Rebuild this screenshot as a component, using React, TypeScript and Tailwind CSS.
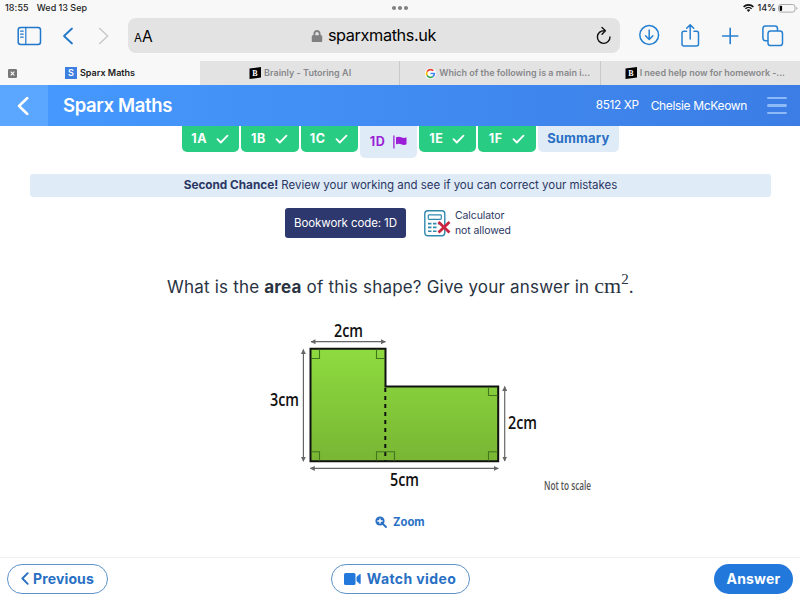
import { ReactNode } from 'react';
import { FaLock } from 'react-icons/fa';

interface BrowserTabProps {
  icon: ReactNode;
  title: string;
  titleClass: string;
}

const tasks = ['1A', '1B', '1C', '1D', '1E', '1F'];

function BrainlyIcon() {
  return (
    <svg width="12" height="12" viewBox="0 0 12 12" className="shrink-0">
      <path d="M.5 1.5 12 0v10.5L.5 12z" fill="#000" />
      <text x="3.2" y="9" fontSize="8" fontWeight="900" fill="#fff" fontFamily="Liberation Serif, serif">B</text>
    </svg>
  );
}

function GoogleIcon() {
  return (
    <svg width="11" height="11" viewBox="-2 -2 52 52" className="shrink-0">
      <circle cx="24" cy="24" r="26" fill="#fff" />
      <g fill="none" strokeWidth="8">
        <path d="M37 11A18.5 18.5 0 0 0 8 15" stroke="#ea4335" />
        <path d="M8 15a18.5 18.5 0 0 0 0 18" stroke="#fbbc05" />
        <path d="M8 33a18.5 18.5 0 0 0 27 6" stroke="#34a853" />
        <path d="M35 39q7-6 7-15H24" stroke="#4285f4" />
      </g>
    </svg>
  );
}

function StatusBar() {
  return (
    <div className="grid h-[18px] grid-cols-3 items-start px-[5px] pt-[2px] text-[9px] leading-[12px] font-medium text-[#222]">
      <div className="flex gap-[8px]">
        <span className="tracking-[0.1px]">18:55</span>
        <span>Wed 13 Sep</span>
      </div>
      <div className="flex h-[12px] items-center justify-center gap-[2px]">
        <i className="size-[4px] rounded-full bg-[#808080]" />
        <i className="size-[4px] rounded-full bg-[#808080]" />
        <i className="size-[4px] rounded-full bg-[#808080]" />
      </div>
      <div className="-mr-[3px] flex items-center justify-end gap-[3px]">
        <svg width="11" height="8" viewBox="0 0 11 8" fill="none" stroke="#111" strokeWidth="1.6">
          <path d="M.6 2.9a7 7 0 0 1 9.8 0M2.4 4.8a4.4 4.4 0 0 1 6.2 0" />
          <path d="M5.5 8 3.8 6.1a2.4 2.4 0 0 1 3.4 0z" fill="#111" stroke="none" />
        </svg>
        <span>14%</span>
        <svg width="20" height="9" viewBox="0 0 20 9" className="-ml-[1px]">
          <rect x=".5" y=".5" width="16.5" height="7.6" rx="2.3" fill="none" stroke="#aaa" />
          <rect x="1.7" y="1.7" width="2.4" height="5.2" rx=".8" fill="#000" />
          <path d="M18.3 2.8v3q1.2-.5 1.2-1.5t-1.2-1.5" fill="#aaa" />
        </svg>
      </div>
    </div>
  );
}

function Toolbar() {
  return (
    <div className="flex h-[35px] items-center">
      <svg width="120" height="35" viewBox="0 0 120 35" fill="none" stroke="#2077ca" strokeWidth="1.5" strokeLinecap="round" strokeLinejoin="round">
        <rect x="18.2" y="9.4" width="22.3" height="17" rx="2.5" />
        <path d="M25.8 9.4v17M20.6 13.2h2.6M20.6 16.2h2.6M20.6 19.2h2.6" strokeWidth="1.2" />
        <path d="m72 10.5-8 7.5 8 7.5" strokeWidth="1.8" />
        <path d="m99.7 10.5 8 7.5-8 7.5" stroke="#c9c9c9" />
      </svg>
      <div className="ml-[8px] flex h-[35px] w-[492px] items-center rounded-[8px] bg-[#e3e3e4] pr-[8px] pl-[6px]">
        <span className="w-[60px] pt-[2px] text-[15.5px] leading-none text-black">
          <span className="text-[11.5px]">A</span>A
        </span>
        <div className="flex flex-1 items-center justify-center gap-[5px] pl-[1px]">
          <FaLock size={12} className="text-[#808083]" />
          <span className="text-[16.3px] tracking-[-0.4px] text-black">sparxmaths.uk</span>
        </div>
        <svg width="17" height="20" viewBox="0 0 17 20" fill="none" stroke="#111" strokeWidth="1.4" strokeLinecap="round" strokeLinejoin="round" className="ml-[43px]">
          <path d="M9.5 4.8A6.3 6.3 0 1 0 15 11M7 1.6l3.4 3.2L7 8.3" />
        </svg>
      </div>
      <svg width="180" height="35" viewBox="0 0 180 35" fill="none" stroke="#2680d2" strokeWidth="1.5" strokeLinecap="round" strokeLinejoin="round">
        <circle cx="29.2" cy="17" r="9.4" />
        <path d="M29.2 12v9.3M25.5 17.8l3.7 3.7 3.7-3.7" />
        <path d="M66.5 13.2H64q-2 0-2 2V26q0 2 2 2h12.5q2 0 2-2V15.2q0-2-2-2H74M70.2 21V7M66.7 10.3l3.5-3.4 3.5 3.4" />
        <path d="M110.2 10.4v15.2M102.6 18h15.2" strokeWidth="1.6" />
        <rect x="148" y="13" width="14.5" height="14.5" rx="2.6" />
        <path d="M147.5 22.7h-2q-2.6 0-2.6-2.6v-9.4q0-2.6 2.6-2.6h9.4q2.6 0 2.6 2.6v1.8" />
      </svg>
    </div>
  );
}

function BrowserTab({ icon, title, titleClass }: BrowserTabProps) {
  return (
    <div className="flex h-[24px] flex-1 items-center gap-[3px] border-l border-[#c9c9c9] bg-[#e3e3e4] first:border-l-0">
      {icon}
      <span className={titleClass}>{title}</span>
    </div>
  );
}

function BrowserTabs() {
  return (
    <div className="mt-[8px] flex h-[24px] text-[9px] font-semibold whitespace-nowrap text-[#88888a]">
      <div className="flex w-[200px] items-center pl-[8px] text-[#1c1c1c]">
        <svg width="9" height="9" viewBox="0 0 9 9">
          <rect width="9" height="9" rx="1.3" fill="#777" />
          <path d="m2.7 2.7 3.6 3.6m0-3.6L2.7 6.3" stroke="#fff" strokeWidth="1.1" />
        </svg>
        <span className="ml-[48px] flex size-[12px] items-center justify-center bg-[#3e80df] text-[9px] text-white">S</span>
        <span className="ml-[3px]">Sparx Maths</span>
      </div>
      <div className="flex w-[600px]">
        <BrowserTab icon={<span className="ml-[49px]"><BrainlyIcon /></span>} title="Brainly - Tutoring AI" titleClass="tracking-[0.02px]" />
        <BrowserTab icon={<span className="ml-[25px]"><GoogleIcon /></span>} title="Which of the following is a main i..." titleClass="tracking-[-0.01px]" />
        <BrowserTab icon={<span className="ml-[24px]"><BrainlyIcon /></span>} title="I need help now for homework -..." titleClass="tracking-[-0.03px]" />
      </div>
    </div>
  );
}

function Header() {
  return (
    <header className="flex h-[41px] items-center bg-linear-to-r from-[#469aff] to-[#3b7de5] text-white">
      <div className="flex h-full w-[48px] items-center bg-[#5ba6ff] pl-[17px]">
        <svg width="12" height="20" viewBox="0 0 12 20" fill="none" stroke="#fff" strokeWidth="2.5" strokeLinecap="round" strokeLinejoin="round">
          <path d="M10.3 2 2 10l8.3 8" />
        </svg>
      </div>
      <h1 className="ml-[15px] text-[18.5px] font-semibold tracking-[-0.35px]">Sparx Maths</h1>
      <span className="ml-auto text-[11.8px] tracking-[-0.35px]">8512 XP</span>
      <span className="ml-[12px] text-[12px] tracking-[-0.35px]">Chelsie McKeown</span>
      <div className="mr-[13px] ml-[20px] flex w-[20px] flex-col gap-[5px]">
        <i className="h-[2.5px] rounded-full bg-[#8db9f7]" />
        <i className="h-[2.5px] rounded-full bg-[#8db9f7]" />
        <i className="h-[2.5px] rounded-full bg-[#8db9f7]" />
      </div>
    </header>
  );
}

function CheckIcon() {
  return (
    <svg width="13" height="10" viewBox="0 0 12 10" fill="none" stroke="#fff" strokeWidth="1.8" strokeLinecap="round" strokeLinejoin="round">
      <path d="m1 5.2 3.3 3.3L11 1.7" />
    </svg>
  );
}

function TaskTabs() {
  return (
    <nav className="flex h-[32px] items-start gap-[2px] pl-[182px] text-[12.5px] font-bold">
      {tasks.map((task) =>
        task === '1D' ? (
          <div key={task} className="flex h-[32px] w-[57.3px] items-center justify-center gap-[8px] rounded-b-[5px] bg-[#dfebf7] text-[#9a1fd6]">
            <span className="tracking-[0.6px]">{task}</span>
            <svg width="14" height="14" viewBox="0 0 14 14">
              <path d="M.9.5v13" stroke="#9a1fd6" strokeWidth="1.3" />
              <path d="M3 2.3q2.700-1.300 5.300 0t5.200 0v7q-2.600 1.300-5.200 0T3 9.300z" fill="#9a1fd6" />
            </svg>
          </div>
        ) : (
          <div key={task} className="flex h-[26px] w-[57.3px] items-center justify-center gap-[9px] rounded-b-[5px] bg-[#29cc83] pr-px text-white">
            <span className="tracking-[0.6px]">{task}</span>
            <CheckIcon />
          </div>
        )
      )}
      <div className="flex h-[26px] w-[81px] items-center justify-center rounded-b-[5px] bg-[#dfebf7] text-[13px] tracking-[0.15px] text-[#2970c4]">Summary</div>
    </nav>
  );
}

function CalculatorIcon() {
  return (
    <svg width="27" height="28" viewBox="0 0 27 28" fill="none">
      <rect x=".8" y="1.8" width="20" height="25" rx="3" stroke="#3289b0" strokeWidth="1.4" />
      <rect x="4.3" y="5.8" width="13" height="4.5" rx=".8" stroke="#3289b0" strokeWidth="1.2" />
      <path d="M4 14.6h14M4 18.4h10M4 22.2h10" stroke="#3289b0" strokeWidth="1.6" strokeDasharray="3.5 1.5" />
      <path d="m14.5 13 11 10.500M25.500 13l-11 10.500" stroke="#c92440" strokeWidth="2.8" />
    </svg>
  );
}

function Arrow({ d }: { d: string }) {
  return <path d={d} stroke="#666" strokeWidth="1.2" fill="none" markerStart="url(#arrow)" markerEnd="url(#arrow)" />;
}

function Diagram() {
  return (
    <svg width="440" height="192" viewBox="260 308 440 192" className="ml-[260px]" fontFamily="Open Sans, sans-serif">
      <defs>
        <linearGradient id="grass" x1="0" y1="0" x2="0" y2="1">
          <stop offset="0" stopColor="#8edb40" />
          <stop offset="1" stopColor="#78b633" />
        </linearGradient>
        <marker id="arrow" viewBox="0 0 5 5" refX="4.5" refY="2.5" markerWidth="5" markerHeight="5" markerUnits="userSpaceOnUse" orient="auto-start-reverse">
          <path d="M0 0 5 2.5 0 5z" fill="#666" />
        </marker>
      </defs>
      <path d="M310.5 348.8h75v37.6h112.700v74.900H310.500z" fill="url(#grass)" stroke="#111" strokeWidth="2" />
      <path d="M385.3 388v73" stroke="#111" strokeWidth="2" strokeDasharray="4 4" />
      <path d="M319.5 349.500v9h-8M376.500 349.500v9h8.500M311.500 451.700h8v9M376.500 460.500v-8.800h18v8.800M488.500 387v8.500h9M497.500 451.700h-9v9" fill="none" stroke="#42751e" strokeWidth="1.1" />
      <Arrow d="M311 341.7h74.5" />
      <Arrow d="M303.4 349.5v111.8" />
      <Arrow d="M504.7 386.5v74.5" />
      <Arrow d="M310.3 468.4h188" />
      <g fontSize="18" fontWeight="600" fill="#111">
        <text x="334" y="337" textLength="29" lengthAdjust="spacingAndGlyphs">2cm</text>
        <text x="270" y="405.5" textLength="29" lengthAdjust="spacingAndGlyphs">3cm</text>
        <text x="508" y="429" textLength="29" lengthAdjust="spacingAndGlyphs">2cm</text>
        <text x="390" y="486" textLength="29" lengthAdjust="spacingAndGlyphs">5cm</text>
      </g>
      <text x="544" y="489.5" fontSize="12" fontWeight="600" fill="#555" textLength="47" lengthAdjust="spacingAndGlyphs">Not to scale</text>
    </svg>
  );
}

function ZoomIcon() {
  return (
    <svg width="12" height="12" viewBox="0 0 12 12" stroke="#2970c4" strokeLinecap="round">
      <circle cx="5" cy="5" r="4.6" fill="#2970c4" stroke="none" />
      <path d="m8 8 3 3" strokeWidth="1.8" />
      <path d="M5 2.8v4.400M2.800 5h4.400" stroke="#fff" strokeWidth="1.3" />
    </svg>
  );
}

function Footer() {
  return (
    <footer className="grid h-[43px] grid-cols-3 items-start border-t border-[#f0f0f0] px-[7px] pt-[6px] text-[14px] font-bold text-[#2970c4]">
      <button className="flex h-[30px] w-[101px] items-center justify-center gap-[4px] rounded-full border border-[#5b93ca] pb-px">
        <svg width="8" height="13" viewBox="0 0 8 13" fill="none" stroke="#2970c4" strokeWidth="1.9" strokeLinecap="round" strokeLinejoin="round">
          <path d="M6.7 1.2 1.4 6.5l5.3 5.3" />
        </svg>
        <span className="tracking-[0.12px]">Previous</span>
      </button>
      <button className="flex h-[30px] w-[139px] items-center justify-center gap-[5px] justify-self-center rounded-full border border-[#5b93ca] pb-px">
        <svg width="18" height="12" viewBox="0 0 18 12" fill="#2378dc">
          <rect width="11.5" height="12" rx="1.5" />
          <path d="m12.5 4 3-2.800q1.200-.5 1.200.5v8.600q0 1-1.200.5l-3-2.800z" />
        </svg>
        <span className="tracking-[0.4px]">Watch video</span>
      </button>
      <button className="h-[30px] w-[79px] justify-self-end rounded-full bg-[#2378dc] pb-[2px] tracking-[0.2px] text-white">Answer</button>
    </footer>
  );
}

export default function App() {
  return (
    <div className="flex h-[600px] w-[800px] flex-col overflow-hidden bg-white font-['Inter',sans-serif]">
      <div className="bg-[#f8f8f8]">
        <StatusBar />
        <Toolbar />
        <BrowserTabs />
      </div>
      <Header />
      <main className="flex flex-1 flex-col text-[#2b3763]">
        <TaskTabs />
        <div className="mr-[29px] ml-[30px] mt-[16px] flex h-[23px] items-center justify-center rounded-[3px] bg-[#dfebf7] pt-px text-[11.5px]">
          <p className="tracking-[-0.02px]"><strong className="text-[11.8px] font-bold">Second Chance!</strong> Review your working and see if you can correct your mistakes</p>
        </div>
        <div className="mt-[11px] flex h-[30px] items-center pl-[285px]">
          <div className="flex h-[30px] w-[121px] items-center justify-center rounded-[3px] bg-[#2d386e] pt-px text-[11.5px] tracking-[-0.1px] text-white">Bookwork code: 1D</div>
          <div className="ml-[18px]"><CalculatorIcon /></div>
          <p className="ml-[4px] text-[10.5px] leading-[15px] tracking-[-0.1px]">Calculator<br />not allowed</p>
        </div>
        <p className="mt-[35px] flex h-[30px] items-center pl-[167px] text-[17px] whitespace-pre text-[#293342]">
          <span className="tracking-[0.2px]">What is the <strong className="font-bold">area</strong> of this shape? Give your answer in </span>
          <span className="-mt-[5px] font-['Liberation_Serif',serif] text-[22px]">cm<sup className="-top-[9px] text-[15px]">2</sup></span>.
        </p>
        <div className="mt-[5px]"><Diagram /></div>
        <button className="mt-[14px] ml-[375px] flex h-[16px] items-center gap-[6px] text-[11.3px] font-bold text-[#2970c4]">
          <ZoomIcon />
          Zoom
        </button>
      </main>
      <Footer />
    </div>
  );
}
